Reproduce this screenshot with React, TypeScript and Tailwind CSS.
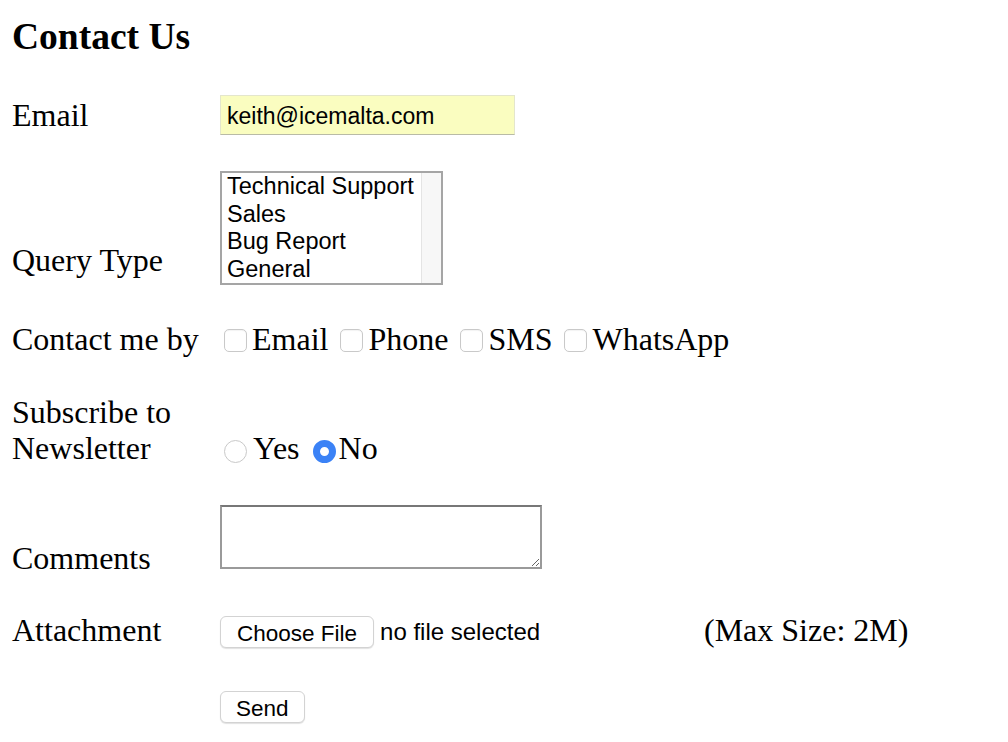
import { useState } from 'react'

const LABEL = 'w-[208px] shrink-0 text-[32px] leading-[36px]'
const SANS = "font-['Liberation_Sans',Arial,sans-serif]"

const QUERY_TYPES = ['Technical Support', 'Sales', 'Bug Report', 'General']
const CONTACT_BY = ['Email', 'Phone', 'SMS', 'WhatsApp']

function Checkbox({ label }: { label: string }) {
  const [checked, setChecked] = useState(false)
  return (
    <label className="flex items-center">
      <input
        type="checkbox"
        checked={checked}
        onChange={() => setChecked(!checked)}
        className="ml-[4px] mr-[5px] mt-[2px] h-[23px] w-[23px] appearance-none rounded-[5px] border border-[#c9c9c9] bg-white shadow-[inset_0_1px_1px_rgba(0,0,0,0.05)]"
      />
      <span className="text-[32px] leading-[36px]">{label}</span>
    </label>
  )
}

function Radio({ label, checked, onSelect }: { label: string; checked: boolean; onSelect: () => void }) {
  return (
    <label className="flex items-center">
      <input
        type="radio"
        name="newsletter"
        checked={checked}
        onChange={onSelect}
        className={
          checked
            ? 'ml-[4px] mr-[3px] mt-[6px] h-[23px] w-[23px] appearance-none rounded-full border-[7px] border-[#3b82f6] bg-white'
            : 'ml-[4px] mr-[6px] mt-[6px] h-[23px] w-[23px] appearance-none rounded-full border border-[#c9c9c9] bg-white'
        }
      />
      <span className="text-[32px] leading-[36px]">{label}</span>
    </label>
  )
}

export default function App() {
  const [subscribe, setSubscribe] = useState('no')

  return (
    <div className="min-h-screen bg-white pl-3 pt-[16px] font-['Liberation_Serif','Times_New_Roman',serif] text-black">
      <h3 className="text-[37.5px] font-bold leading-[42px]">Contact Us</h3>

      {/* ── Email ─────────────────────────────── */}
      <div className="mt-[37px] flex items-center">
        <label className={LABEL}>Email</label>
        <input
          type="email"
          defaultValue="keith@icemalta.com"
          className={`${SANS} h-[40px] w-[295px] border border-[#e4e6cc] border-b-[#b9bba6] bg-[#fafdc0] pl-[6px] pt-[3px] text-[23px] outline-none`}
        />
      </div>

      {/* ── Query type (listbox) ──────────────── */}
      <div className="mt-[36px] flex items-end">
        <span className={`${LABEL} mb-[7px]`}>Query Type</span>
        <div className={`${SANS} flex h-[114px] w-[223px] border-2 border-[#a5a5a5] bg-white`}>
          <div className="flex-1 overflow-hidden pl-[5px] text-[23.5px] leading-[27.5px]">
            {QUERY_TYPES.map((q) => (
              <div key={q}>{q}</div>
            ))}
          </div>
          <div className="w-[20px] border-l border-[#e4e4e4] bg-[#f7f7f7]" />
        </div>
      </div>

      {/* ── Contact me by ─────────────────────── */}
      <div className="mt-[36px] flex items-center">
        <span className={LABEL}>Contact me by</span>
        <div className="flex items-center gap-[8px]">
          {CONTACT_BY.map((c) => (
            <Checkbox key={c} label={c} />
          ))}
        </div>
      </div>

      {/* ── Newsletter ────────────────────────── */}
      <div className="mt-[37px] flex items-end">
        <span className={LABEL}>Subscribe to Newsletter</span>
        <div className="flex items-center gap-[9px]">
          <Radio label="Yes" checked={subscribe === 'yes'} onSelect={() => setSubscribe('yes')} />
          <Radio label="No" checked={subscribe === 'no'} onSelect={() => setSubscribe('no')} />
        </div>
      </div>

      {/* ── Comments ──────────────────────────── */}
      <div className="mt-[39px] flex items-start">
        <span className={`${LABEL} mt-[35px]`}>Comments</span>
        <textarea className="h-[64px] w-[322px] border-2 border-[#9a9a9a] border-t-[#777777] bg-white outline-none" />
      </div>

      {/* ── Attachment ────────────────────────── */}
      <div className="mt-[36px] flex items-start">
        <span className={LABEL}>Attachment</span>
        <div className={`${SANS} mt-[2px] flex w-[484px] items-center gap-[6px]`}>
          <button className="h-[32px] rounded-[6px] border border-[#d3d3d3] bg-white px-[16px] text-[22.5px] shadow-[0_1px_1px_rgba(0,0,0,0.12)]">
            Choose File
          </button>
          <span className="text-[24px]">no file selected</span>
        </div>
        <span className="text-[32px] leading-[36px]">(Max Size: 2M)</span>
      </div>

      {/* ── Send ──────────────────────────────── */}
      <div className="mt-[41px] pl-[208px]">
        <button
          className={`${SANS} h-[32px] rounded-[6px] border border-[#d3d3d3] bg-white px-[15px] text-[22.5px] shadow-[0_1px_1px_rgba(0,0,0,0.12)]`}
        >
          Send
        </button>
      </div>
    </div>
  )
}
